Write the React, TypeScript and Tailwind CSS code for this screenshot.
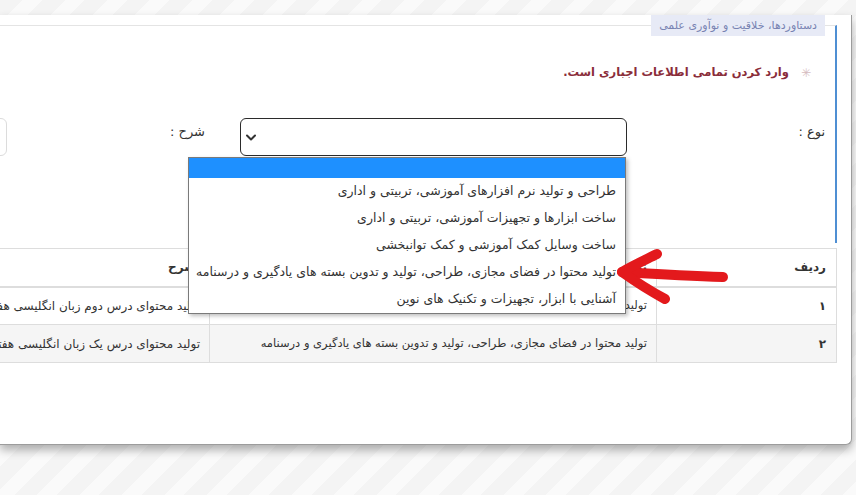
import React from "react";

const options = [
  "",
  "طراحی و تولید نرم افزارهای آموزشی، تربیتی و اداری",
  "ساخت ابزارها و تجهیزات آموزشی، تربیتی و اداری",
  "ساخت وسایل کمک آموزشی و کمک توانبخشی",
  "تولید محتوا در فضای مجازی، طراحی، تولید و تدوین بسته های یادگیری و درسنامه",
  "آشنایی با ابزار، تجهیزات و تکنیک های نوین",
];

const rows = [
  { n: "۱", type: "تولید محتوا در فضای مجازی، طراحی، تولید و تدوین بسته های یادگیری و درسنامه", desc: "تولید محتوای درس دوم زبان انگلیسی هفتم" },
  { n: "۲", type: "تولید محتوا در فضای مجازی، طراحی، تولید و تدوین بسته های یادگیری و درسنامه", desc: "تولید محتوای درس یک زبان انگلیسی هفتم" },
];

const App = () => {
  return (
    <div
      className="relative w-[856px] h-[495px] overflow-hidden bg-[repeating-linear-gradient(135deg,#f4f4f4_0px,#f4f4f4_16px,#fafafa_16px,#fafafa_30px)] text-[#333]"
      style={{ fontFamily: '"DejaVu Sans", sans-serif' }}
    >
      <div
        dir="rtl"
        className="w-[852px] h-[430px] bg-white border-r border-b border-[#9c9c9c] rounded-br-[6px] shadow-[0_5px_10px_rgba(0,0,0,0.3)] pr-[14px]"
      >
        <fieldset className="mt-[15px] h-[228px] border-t border-t-[#e4e4e4] border-r-2 border-r-[#4f8fd3] pr-[10px]">
          <legend className="h-[21px] px-[8px] bg-[#e7eaf6] text-[11px] leading-[21px] text-[#7883b2]">
            دستاوردها، خلاقیت و نوآوری علمی
          </legend>

          <div className="mt-[28px] h-[18px] flex items-center pr-[14px] gap-[12px]">
            <span className="text-[12px] text-[#d6bcc0]">✳</span>
            <span className="text-[11.5px] font-bold text-[#8a2d3a]">وارد کردن تمامی اطلاعات اجباری است.</span>
          </div>

          <div className="mt-[36px] flex items-start">
            <div className="w-[198px] shrink-0 pt-[4px] text-[13px]">نوع :</div>
            <div className="relative w-[387px] h-[38px] shrink-0 border border-[#2b2b2b] rounded-[6px]">
              <svg className="absolute left-[4px] top-[14px]" width="12" height="9" viewBox="0 0 12 9">
                <path d="M2 2.5 L6 6.5 L10 2.5" fill="none" stroke="#333" strokeWidth="2" strokeLinecap="round" strokeLinejoin="round" />
              </svg>
              <div className="absolute right-[0px] top-[38px] w-[438px] bg-white border border-[#7a7a7a] shadow-[2px_2px_4px_rgba(0,0,0,0.25)] z-10">
                {options.map((o, i) =>
                  i === 0 ? (
                    <div key={i} className="h-[20px] bg-[#1e90ff]" />
                  ) : (
                    <div key={i} className="h-[27px] flex items-center pr-[9px] text-[12.5px] text-[#333] whitespace-nowrap">
                      {o}
                    </div>
                  )
                )}
              </div>
            </div>
            <div className="w-[35px] shrink-0" />
            <div className="w-[198px] shrink-0 pt-[4px] text-[13px]">شرح :</div>
            <div className="w-[300px] h-[38px] shrink-0 border border-[#dcdcdc] rounded-[6px]" />
          </div>
        </fieldset>

        <table className="mt-[5px] table-fixed border-collapse w-[1037px] text-[12px]">
          <thead>
            <tr className="h-[38px]">
              <th className="w-[180px] border border-[#dddddd] border-b-2 pr-[10px] text-right font-bold">ردیف</th>
              <th className="w-[447px] border border-[#dddddd] border-b-2 pr-[9px] text-right font-bold">نوع</th>
              <th className="w-[410px] border border-[#dddddd] border-b-2 pr-[13px] text-right font-bold">شرح</th>
            </tr>
          </thead>
          <tbody>
            {rows.map((r, i) => (
              <tr key={r.n} className={`h-[38px] ${i % 2 === 1 ? "bg-[#f5f5f5]" : "bg-white"}`}>
                <td className="border border-[#dddddd] pr-[10px] font-bold">{r.n}</td>
                <td className="border border-[#dddddd] pr-[9px] text-[11.5px] whitespace-nowrap overflow-hidden">{r.type}</td>
                <td className="border border-[#dddddd] pr-[9px] whitespace-nowrap overflow-hidden">{r.desc}</td>
              </tr>
            ))}
          </tbody>
        </table>
      </div>

      <svg className="absolute left-0 top-0 pointer-events-none z-20" width="856" height="495">
        <g fill="none" stroke="#e3191c" strokeWidth="10" strokeLinecap="round" strokeLinejoin="round">
          <path d="M723 277 C690 276 655 274 622 272" />
          <path d="M657 254 C645 260 632 266 622 272 C636 282 652 292 665 299" />
        </g>
      </svg>
    </div>
  );
};

export default App;
